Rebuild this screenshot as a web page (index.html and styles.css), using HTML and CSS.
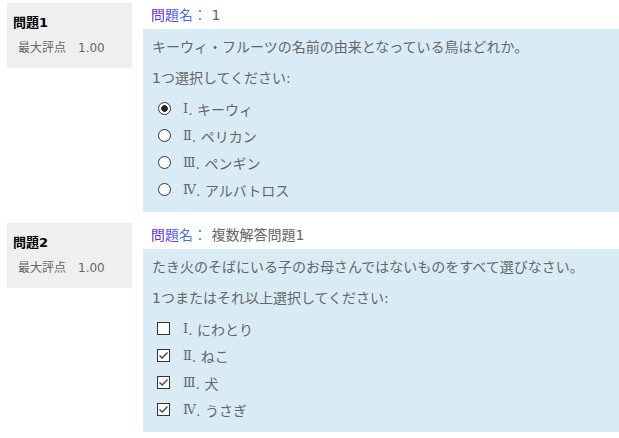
FILE: index.html
```html
<!DOCTYPE html>
<html lang="ja">
<head>
  <meta charset="UTF-8">
  <title>小テスト</title>
  <link rel="stylesheet" href="styles.css">
</head>
<body>
  <div class="que">
    <div class="info">
      <h3 class="no">問題1</h3>
      <div class="grade">最大評点<span class="mark">1.00</span></div>
    </div>
    <div class="content">
      <div class="qname"><span class="label">問題名：</span> 1</div>
      <div class="formulation">
        <p class="qtext">キーウィ・フルーツの名前の由来となっている鳥はどれか。</p>
        <p class="prompt">1つ選択してください:</p>
        <div class="answer">
          <label class="option"><input type="radio" name="q1" checked><span class="num">Ⅰ</span>. キーウィ</label>
          <label class="option"><input type="radio" name="q1"><span class="num">Ⅱ</span>. ペリカン</label>
          <label class="option"><input type="radio" name="q1"><span class="num">Ⅲ</span>. ペンギン</label>
          <label class="option"><input type="radio" name="q1"><span class="num">Ⅳ</span>. アルバトロス</label>
        </div>
      </div>
    </div>
  </div>

  <div class="que">
    <div class="info">
      <h3 class="no">問題2</h3>
      <div class="grade">最大評点<span class="mark">1.00</span></div>
    </div>
    <div class="content">
      <div class="qname"><span class="label">問題名：</span> 複数解答問題1</div>
      <div class="formulation">
        <p class="qtext">たき火のそばにいる子のお母さんではないものをすべて選びなさい。</p>
        <p class="prompt">1つまたはそれ以上選択してください:</p>
        <div class="answer">
          <label class="option"><input type="checkbox"><span class="num">Ⅰ</span>. にわとり</label>
          <label class="option"><input type="checkbox" checked><span class="num">Ⅱ</span>. ねこ</label>
          <label class="option"><input type="checkbox" checked><span class="num">Ⅲ</span>. 犬</label>
          <label class="option"><input type="checkbox" checked><span class="num">Ⅳ</span>. うさぎ</label>
        </div>
      </div>
    </div>
  </div>
</body>
</html>
```

FILE: styles.css
```css
body {
  margin: 0;
  padding: 3px 0 0 7px;
  font-family: "DejaVu Sans", "Noto Sans CJK JP", sans-serif;
  font-size: 14px;
  color: #666;
  background: #fff;
}
.que {
  display: flex;
  margin-bottom: 11px;
}
.info {
  width: 125px;
  height: 65px;
  flex: none;
  box-sizing: border-box;
  padding: 11px 0 0 6px;
  background-color: #efefef;
}
.no {
  margin: 0;
  font-size: 13px;
  line-height: 18px;
  font-weight: bold;
  color: #000;
}
.grade {
  margin: 7px 0 0 5px;
  font-size: 12px;
  line-height: 18px;
  color: #666;
}
.mark {
  margin-left: 12px;
}
.content {
  flex: 1;
  margin-left: 11px;
}
.qname {
  height: 26px;
  padding-left: 8px;
  line-height: 24px;
}
.label {
  background: linear-gradient(90deg, #6410ff, #1ea4ff);
  -webkit-background-clip: text;
  background-clip: text;
  color: transparent;
}
.formulation {
  padding: 8px 9px 9px 9px;
  background-color: #d9ecf6;
}
.qtext {
  margin: 0 0 11px;
  line-height: 20px;
}
.prompt {
  margin: 0 0 7px;
  line-height: 20px;
}
.option {
  display: flex;
  align-items: center;
  height: 27px;
  padding-left: 6px;
  white-space: pre;
}
.num {
  font-family: "DejaVu Serif", "Noto Sans CJK JP", serif;
  font-size: 13px;
}
.option input {
  appearance: none;
  -webkit-appearance: none;
  box-sizing: border-box;
  width: 13px;
  height: 13px;
  margin: 0 12px 0 0;
  border: 1px solid #333;
  background-color: #fff;
}
.option input[type="radio"] {
  border-radius: 50%;
}
.option input[type="radio"]:checked {
  background: radial-gradient(circle, #222 0, #222 3px, #fff 3.6px);
}
.option input[type="checkbox"] {
  margin-left: -1px;
  margin-right: 13px;
}
.option input[type="checkbox"]:checked {
  background: #fff url("data:image/svg+xml,%3Csvg xmlns='http://www.w3.org/2000/svg' width='11' height='11'%3E%3Cpath d='M1.5 5.5 L4.2 8 L9.5 2.5' fill='none' stroke='%23444' stroke-width='1.3'/%3E%3C/svg%3E") no-repeat center;
}
```
